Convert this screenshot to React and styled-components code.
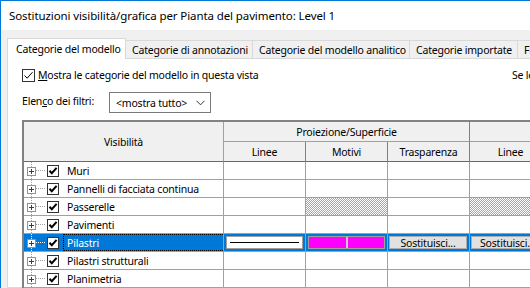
import React from 'react';
import styled, { createGlobalStyle } from 'styled-components';

const GlobalStyle = createGlobalStyle`
  html, body { margin: 0; padding: 0; background: #ffffff; }
  body {
    font-family: "Noto Sans", "Segoe UI", sans-serif;
    font-size: 10.5px;
    letter-spacing: -0.2px;
    color: #000;
    overflow: hidden;
  }
`;

const COLS = '200px 82px 82px 82px 82px 82px 82px';

const Window = styled.div`
  width: 530px;
  height: 288px;
  box-sizing: border-box;
  border-top: 1px solid #0078d7;
  border-left: 1px solid #0078d7;
  display: flex;
  flex-direction: column;
  overflow: hidden;
  background: #f0f0f0;
`;

const TitleBar = styled.div`
  height: 29px;
  flex: none;
  background: #fff;
  display: flex;
  align-items: center;
  padding-left: 8px;
  font-size: 11.5px;
  letter-spacing: -0.1px;
  white-space: nowrap;
`;

const Body = styled.div`
  flex: 1;
  min-height: 0;
  padding: 8px 0 0 6px;
  display: flex;
  flex-direction: column;
`;

const TabStrip = styled.div`
  display: flex;
  align-items: flex-end;
  height: 20px;
  flex: none;
  position: relative;
  z-index: 1;
`;

const Tab = styled.div`
  box-sizing: border-box;
  flex: none;
  width: ${p => p.$w}px;
  height: ${p => (p.$active ? 21 : 18)}px;
  margin-bottom: ${p => (p.$active ? -1 : 0)}px;
  margin-left: ${p => (p.$first ? 0 : -1)}px;
  border: 1px solid #d9d9d9;
  border-bottom: none;
  background: ${p => (p.$active ? '#ffffff' : '#f0f0f0')};
  display: flex;
  align-items: center;
  padding: ${p => (p.$active ? '0 0 0 8px' : '1px 0 0 6px')};
  white-space: nowrap;
  overflow: hidden;
`;

const Panel = styled.div`
  flex: 1;
  min-height: 0;
  width: 640px;
  box-sizing: border-box;
  background: #fff;
  border: 1px solid #d9d9d9;
  padding: 9px 0 0 14px;
  display: flex;
  flex-direction: column;
`;

const CheckRow = styled.div`
  display: grid;
  grid-template-columns: 490px auto;
  align-items: center;
  height: 13px;
  white-space: nowrap;
`;

const CheckLabel = styled.label`
  display: flex;
  align-items: center;
  gap: 3px;
`;

const Hint = styled.span`
  white-space: nowrap;
`;

const BigBox = styled.span`
  width: 13px;
  height: 13px;
  box-sizing: border-box;
  border: 1px solid #333;
  background: #fff;
  display: inline-flex;
  flex: none;
`;

const FilterRow = styled.div`
  margin-top: 11px;
  display: flex;
  align-items: center;
  height: 21px;
`;

const FilterLabel = styled.span`
  width: 87px;
  flex: none;
  margin-top: -3px;
`;

const Dropdown = styled.div`
  width: 102px;
  height: 21px;
  box-sizing: border-box;
  border: 1px solid #7a7a7a;
  background: #fff;
  display: flex;
  align-items: center;
  justify-content: space-between;
  padding: 0 5px 0 6px;
`;

const Table = styled.div`
  margin-top: 7px;
  border-left: 2px solid #828282;
  border-top: 2px solid #828282;
  display: flex;
  flex-direction: column;
  align-self: flex-start;
`;

const HeaderGrid = styled.div`
  display: grid;
  grid-template-columns: ${COLS};
  grid-template-rows: 20px 20px;
  background: #f0f0f0;
`;

const HeadCell = styled.div`
  box-sizing: border-box;
  display: flex;
  align-items: center;
  justify-content: center;
  border-right: 1px solid ${p => (p.$first ? '#a0a0a0' : '#808080')};
  border-bottom: 1px solid ${p => (p.$group ? '#a0a0a0' : '#696969')};
  grid-row: ${p => (p.$first ? '1 / 3' : 'auto')};
  grid-column: ${p => (p.$group ? 'span 3' : 'auto')};
  white-space: nowrap;
  overflow: hidden;
`;

const Row = styled.div`
  display: grid;
  grid-template-columns: ${COLS};
  height: 18px;
  background: ${p => (p.$selected ? '#0078d7' : '#fff')};
`;

const Cell = styled.div`
  box-sizing: border-box;
  border-right: 1px solid #a0a0a0;
  border-bottom: 1px solid #a0a0a0;
  display: flex;
  align-items: center;
  background: ${p =>
    p.$hatch
      ? 'repeating-conic-gradient(#a6a6a6 0 25%, #ffffff 0 50%) 0 0 / 2px 2px'
      : 'transparent'};
  padding: ${p => (p.$inset ? '2px 2px 2px 2px' : '0')};
  overflow: hidden;
`;

const TreeCell = styled(Cell)`
  padding-left: 3px;
  color: ${p => (p.$selected ? '#fff' : '#000')};
  background-image: repeating-linear-gradient(
    to bottom,
    ${p => (p.$selected ? '#ffffff' : '#a0a0a0')} 0 1px,
    transparent 1px 2px
  );
  background-size: 1px 100%;
  background-position: 7px 0;
  background-repeat: no-repeat;
`;

const Expander = styled.span`
  width: 9px;
  height: 9px;
  box-sizing: border-box;
  border: 1px solid #919191;
  background: #fff;
  flex: none;
  display: inline-flex;
  margin-top: 1px;
`;

const Connector = styled.span`
  width: 10px;
  height: 1px;
  flex: none;
  background: repeating-linear-gradient(
    to right,
    ${p => (p.$selected ? '#ffffff' : '#a0a0a0')} 0 1px,
    transparent 1px 2px
  );
`;

const SmallBox = styled.span`
  width: 12px;
  height: 12px;
  box-sizing: border-box;
  border: 1px solid #333;
  background: #fff;
  flex: none;
  display: inline-flex;
  margin-left: 1px;
`;

const Name = styled.span`
  margin-left: ${p => (p.$selected ? 4 : 8)}px;
  padding-left: ${p => (p.$selected ? 3 : 0)}px;
  align-self: stretch;
  flex: 1;
  display: flex;
  align-items: center;
  white-space: nowrap;
  border: ${p => (p.$selected ? '1px dotted #000' : 'none')};
  border-right: none;
`;

const LineBox = styled.div`
  flex: 1;
  align-self: stretch;
  background: #fff;
  border: 1px solid #a0a0a0;
  display: flex;
  align-items: center;
  padding: 0 3px;
`;

const LineStroke = styled.div`
  flex: 1;
  height: 1px;
  background: #000;
`;

const PatternBox = styled.div`
  flex: 1;
  align-self: stretch;
  border: 1px solid #a0a0a0;
  display: flex;
  gap: 2px;
  background: #c8c8c8;
`;

const Swatch = styled.div`
  flex: 1;
  background: #ff00ff;
`;

const OverrideButton = styled.div`
  flex: 1;
  align-self: stretch;
  background: #e1e1e1;
  border: 1px solid #adadad;
  display: flex;
  align-items: center;
  justify-content: ${p => (p.$clip ? 'flex-start' : 'center')};
  padding-left: ${p => (p.$clip ? 8 : 0)}px;
  white-space: nowrap;
  overflow: hidden;
  margin-left: -1px;
`;

const Plus = () => (
  <svg width="7" height="7" viewBox="0 0 7 7">
    <path d="M1 3.5 H6 M3.5 1 V6" stroke="#2b3e6b" strokeWidth="1" />
  </svg>
);

const ThinCheck = () => (
  <svg width="11" height="11" viewBox="0 0 11 11">
    <path d="M1.5 5.5 L4.2 8.2 L9.5 2.2" fill="none" stroke="#000" strokeWidth="1" />
  </svg>
);

const BoldCheck = () => (
  <svg width="10" height="10" viewBox="0 0 10 10">
    <path d="M1.5 4.8 L3.8 7.2 L8.6 1.8" fill="none" stroke="#000" strokeWidth="2" />
  </svg>
);

const Chevron = () => (
  <svg width="9" height="6" viewBox="0 0 9 6">
    <path d="M0.5 0.8 L4.5 4.8 L8.5 0.8" fill="none" stroke="#333" strokeWidth="1" />
  </svg>
);

const tabs = [
  { label: 'Categorie del modello', w: 119, active: true },
  { label: 'Categorie di annotazioni', w: 128 },
  { label: 'Categorie del modello analitico', w: 158 },
  { label: 'Categorie importate', w: 109 },
  { label: 'Filtri', w: 60 },
];

const rows = [
  { name: 'Muri' },
  { name: 'Pannelli di facciata continua' },
  { name: 'Passerelle', hatch: true },
  { name: 'Pavimenti' },
  { name: 'Pilastri', selected: true },
  { name: 'Pilastri strutturali' },
  { name: 'Planimetria' },
];

function CategoryRow({ row }) {
  const sel = !!row.selected;
  return (
    <Row $selected={sel}>
      <TreeCell $selected={sel}>
        <Expander><Plus /></Expander>
        <Connector $selected={sel} />
        <SmallBox><BoldCheck /></SmallBox>
        <Name $selected={sel}>{row.name}</Name>
      </TreeCell>
      {sel ? (
        <>
          <Cell $inset><LineBox><LineStroke /></LineBox></Cell>
          <Cell $inset><PatternBox><Swatch /><Swatch /></PatternBox></Cell>
          <Cell $inset><OverrideButton>Sostituisci...</OverrideButton></Cell>
          <Cell $inset><OverrideButton $clip>Sostituisci...</OverrideButton></Cell>
          <Cell $inset><OverrideButton>Sostituisci...</OverrideButton></Cell>
          <Cell $inset><OverrideButton>Sostituisci...</OverrideButton></Cell>
        </>
      ) : (
        <>
          <Cell />
          <Cell $hatch={row.hatch} />
          <Cell />
          <Cell $hatch={row.hatch} />
          <Cell $hatch={row.hatch} />
          <Cell />
        </>
      )}
    </Row>
  );
}

export default function App() {
  return (
    <>
      <GlobalStyle />
      <Window>
        <TitleBar>Sostituzioni visibilità/grafica per Pianta del pavimento: Level 1</TitleBar>
        <Body>
          <TabStrip>
            {tabs.map((t, i) => (
              <Tab key={t.label} $w={t.w} $active={t.active} $first={i === 0}>
                {t.label}
              </Tab>
            ))}
          </TabStrip>
          <Panel>
            <CheckRow>
              <CheckLabel>
                <BigBox><ThinCheck /></BigBox>
                <span><u>M</u>ostra le categorie del modello in questa vista</span>
              </CheckLabel>
              <Hint>Se le categorie non sono selezionate, non saranno visibili.</Hint>
            </CheckRow>
            <FilterRow>
              <FilterLabel>Elen<u>c</u>o dei filtri:</FilterLabel>
              <Dropdown>
                <span>&lt;mostra tutto&gt;</span>
                <Chevron />
              </Dropdown>
            </FilterRow>
            <Table>
              <HeaderGrid>
                <HeadCell $first>Visibilità</HeadCell>
                <HeadCell $group>Proiezione/Superficie</HeadCell>
                <HeadCell $group>Taglio</HeadCell>
                <HeadCell>Linee</HeadCell>
                <HeadCell>Motivi</HeadCell>
                <HeadCell>Trasparenza</HeadCell>
                <HeadCell>Linee</HeadCell>
                <HeadCell>Motivi</HeadCell>
                <HeadCell>Mezzitoni</HeadCell>
              </HeaderGrid>
              {rows.map(r => (
                <CategoryRow key={r.name} row={r} />
              ))}
            </Table>
          </Panel>
        </Body>
      </Window>
    </>
  );
}
